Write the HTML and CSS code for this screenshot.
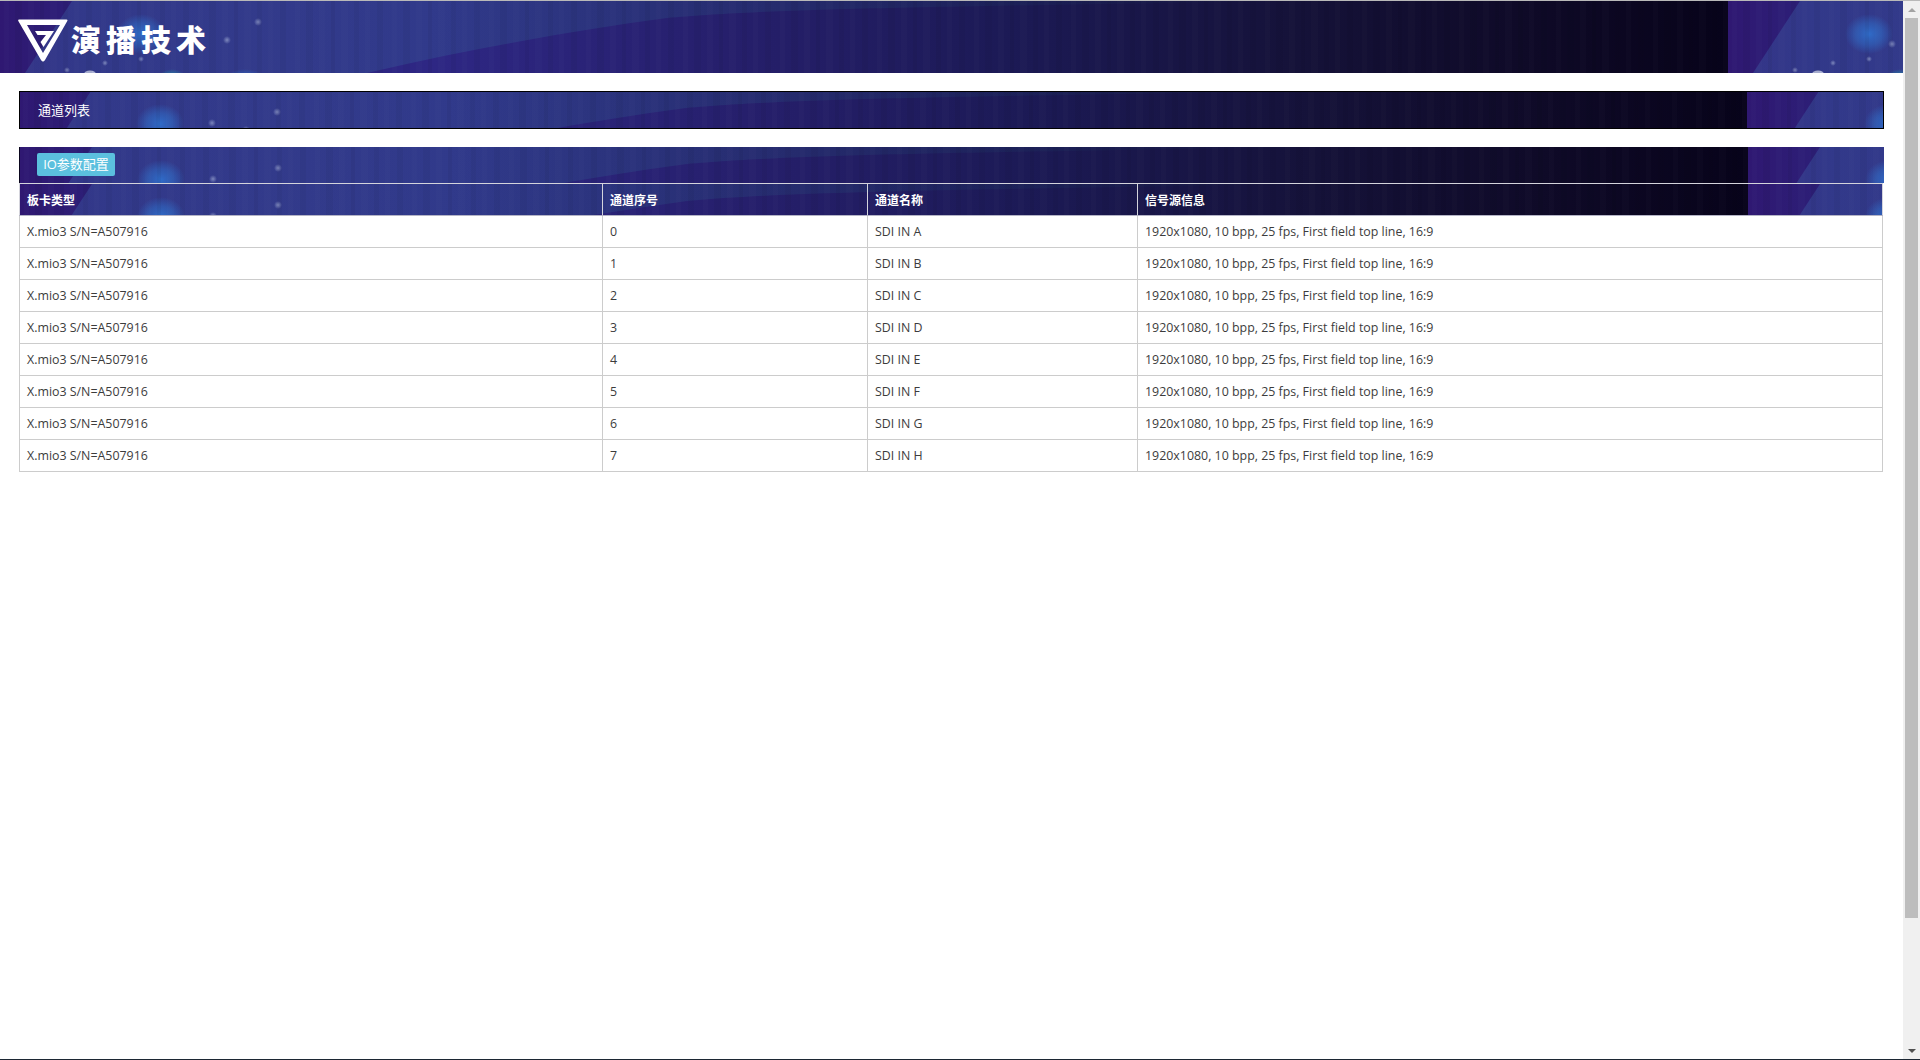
FILE: index.html
```html
<!DOCTYPE html>
<html lang="zh-CN">
<head>
<meta charset="utf-8">
<title>通道列表</title>
<link rel="stylesheet" href="styles.css">
</head>
<body>
<div class="screen">
  <div class="edge-top"></div>
  <div class="middle">
    <main class="page">
      <header class="site-header banner">
        <svg class="logo-mark" viewBox="0 0 50 43" width="50" height="43" aria-hidden="true">
          <path fill-rule="evenodd" fill="#fff" d="M1 0.5H48.5Q50 0.5 49.3 2L27 41Q25 44 23 41L0.3 2Q-0.2 0.5 1 0.5ZM9 6L25 34L42 6Z"/>
          <path fill="#fff" d="M17 12H36L25.500 28L22.500 23L28 16H19.500Z"/>
        </svg>
        <span class="logo-text">演播技术</span>
      </header>
      <div class="content">
        <div class="title-bar banner">通道列表</div>
        <section class="table-panel">
          <div class="toolbar banner"><button class="io-btn" type="button">IO参数配置</button></div>
          <div class="table-wrap">
            <table class="channels">
              <colgroup><col class="col-board"><col class="col-index"><col class="col-name"><col class="col-info"></colgroup>
              <thead>
                <tr class="banner"><th>板卡类型</th><th>通道序号</th><th>通道名称</th><th>信号源信息</th></tr>
              </thead>
              <tbody>
                <tr><td>X.mio3 S/N=A507916</td><td>0</td><td>SDI IN A</td><td>1920x1080, 10 bpp, 25 fps, First field top line, 16:9</td></tr>
                <tr><td>X.mio3 S/N=A507916</td><td>1</td><td>SDI IN B</td><td>1920x1080, 10 bpp, 25 fps, First field top line, 16:9</td></tr>
                <tr><td>X.mio3 S/N=A507916</td><td>2</td><td>SDI IN C</td><td>1920x1080, 10 bpp, 25 fps, First field top line, 16:9</td></tr>
                <tr><td>X.mio3 S/N=A507916</td><td>3</td><td>SDI IN D</td><td>1920x1080, 10 bpp, 25 fps, First field top line, 16:9</td></tr>
                <tr><td>X.mio3 S/N=A507916</td><td>4</td><td>SDI IN E</td><td>1920x1080, 10 bpp, 25 fps, First field top line, 16:9</td></tr>
                <tr><td>X.mio3 S/N=A507916</td><td>5</td><td>SDI IN F</td><td>1920x1080, 10 bpp, 25 fps, First field top line, 16:9</td></tr>
                <tr><td>X.mio3 S/N=A507916</td><td>6</td><td>SDI IN G</td><td>1920x1080, 10 bpp, 25 fps, First field top line, 16:9</td></tr>
                <tr><td>X.mio3 S/N=A507916</td><td>7</td><td>SDI IN H</td><td>1920x1080, 10 bpp, 25 fps, First field top line, 16:9</td></tr>
              </tbody>
            </table>
          </div>
        </section>
      </div>
    </main>
    <aside class="scrollbar" aria-hidden="true">
      <div class="arrow arrow-up"></div>
      <div class="track"><div class="thumb"></div></div>
      <div class="arrow arrow-down"></div>
    </aside>
  </div>
  <div class="edge-bottom"></div>
</div>
</body>
</html>
```
FILE: styles.css
```css
* { box-sizing: border-box; }
html, body { margin: 0; height: 100%; overflow: hidden; background: #fff; }
body {
  font-family: "Open Sans", "Noto Sans CJK SC", sans-serif;
  font-size: 12.4px;
  color: #3c3c3c;
}
.screen { display: flex; flex-direction: column; height: 1060px; }
.edge-top { height: 1px; background: #b9b9b9; flex: none; }
.edge-bottom { height: 1px; background: #1c2733; flex: none; }
.middle { display: flex; flex: 1; min-height: 0; }
.page { flex: 1; min-width: 0; }

.banner {
  background-color: #1a1850;
  background-repeat: repeat-x;
  background-position: 0 0;
  background-image: url("data:image/svg+xml,%3Csvg xmlns='http://www.w3.org/2000/svg' width='1728' height='100'%3E%3Cdefs%3E%3ClinearGradient id='b'%3E%3Cstop offset='0' stop-color='%232f1872'/%3E%3Cstop offset='.05' stop-color='%232c2078'/%3E%3Cstop offset='.25' stop-color='%232e2784'/%3E%3Cstop offset='.42' stop-color='%23261f6c'/%3E%3Cstop offset='.58' stop-color='%231c1a56'/%3E%3Cstop offset='.75' stop-color='%23151239'/%3E%3Cstop offset='.88' stop-color='%230f0a28'/%3E%3Cstop offset='1' stop-color='%2307031a'/%3E%3C/linearGradient%3E%3ClinearGradient id='l'%3E%3Cstop offset='0' stop-color='%233f6fb4' stop-opacity='.32'/%3E%3Cstop offset='.2' stop-color='%233f6fa8' stop-opacity='.3'/%3E%3Cstop offset='.5' stop-color='%232f7090' stop-opacity='.2'/%3E%3Cstop offset='.8' stop-color='%23206878' stop-opacity='.08'/%3E%3Cstop offset='1' stop-color='%23206878' stop-opacity='0'/%3E%3C/linearGradient%3E%3CradialGradient id='g'%3E%3Cstop offset='0' stop-color='%232f78d8' stop-opacity='.8'/%3E%3Cstop offset='.55' stop-color='%232f70cc' stop-opacity='.5'/%3E%3Cstop offset='1' stop-color='%232f70cc' stop-opacity='0'/%3E%3C/radialGradient%3E%3CradialGradient id='t'%3E%3Cstop offset='0' stop-color='%2320a8b8' stop-opacity='.8'/%3E%3Cstop offset='1' stop-color='%2320a8b8' stop-opacity='0'/%3E%3C/radialGradient%3E%3CradialGradient id='d'%3E%3Cstop offset='0' stop-color='%23b8c4e4' stop-opacity='.55'/%3E%3Cstop offset='1' stop-color='%23b8c4e4' stop-opacity='0'/%3E%3C/radialGradient%3E%3Cpattern id='s' width='97' height='10' patternUnits='userSpaceOnUse'%3E%3Crect x='4' width='5' height='10' fill='%23fff' opacity='.012'/%3E%3Crect x='15' width='7' height='10' fill='%23000' opacity='.04'/%3E%3Crect x='28' width='6' height='10' fill='%23fff' opacity='.01'/%3E%3Crect x='40' width='4' height='10' fill='%23000' opacity='.045'/%3E%3Crect x='50' width='7' height='10' fill='%23fff' opacity='.012'/%3E%3Crect x='63' width='5' height='10' fill='%23000' opacity='.04'/%3E%3Crect x='74' width='5' height='10' fill='%23fff' opacity='.01'/%3E%3Crect x='86' width='6' height='10' fill='%23000' opacity='.04'/%3E%3C/pattern%3E%3C/defs%3E%3Crect width='1728' height='100' fill='url(%23b)'/%3E%3Cpath d='M72 0L25 72L10 100H300L367 72C470 48 570 30 667 17C770 8 900 6 1300 0Z' fill='url(%23l)'/%3E%3Cellipse cx='141' cy='33' rx='24' ry='20' fill='url(%23g)'/%3E%3Cellipse cx='245' cy='80' rx='22' ry='12' fill='url(%23g)'/%3E%3Cellipse cx='172' cy='77' rx='14' ry='9' fill='url(%23t)'/%3E%3Ccircle cx='164' cy='43' r='4' fill='url(%23d)'/%3E%3Ccircle cx='105' cy='62' r='3' fill='url(%23d)'/%3E%3Ccircle cx='141' cy='58' r='3' fill='url(%23d)'/%3E%3Ccircle cx='67' cy='69' r='3' fill='url(%23d)'/%3E%3Cellipse cx='90' cy='73' rx='6' ry='3.500' fill='%23e0e6f5' opacity='.7'/%3E%3Ccircle cx='258' cy='21' r='4' fill='url(%23d)'/%3E%3Ccircle cx='227' cy='39' r='4' fill='url(%23d)'/%3E%3Ccircle cx='193' cy='32' r='4' fill='url(%23d)'/%3E%3Crect width='1728' height='100' fill='url(%23s)'/%3E%3C/svg%3E");
}

.site-header {
  height: 72px;
  padding: 18px 0 0 18px;
  display: flex;
  align-items: flex-start;
}
.logo-mark { flex: none; display: block; }
.logo-text {
  margin: 3px 0 0 3px;
  font-family: "Noto Sans CJK SC", sans-serif;
  font-weight: 900;
  font-size: 30px;
  line-height: 32px;
  letter-spacing: 5px;
  color: #fff;
  white-space: nowrap;
}

.content { padding: 18px 19px 0; }
.title-bar {
  height: 38px;
  border: 1px solid #000;
  background-position: -1px -1px;
  padding-left: 18px;
  font-size: 13px;
  line-height: 36px;
  color: #fff;
  font-family: "Noto Sans CJK SC", sans-serif;
}
.table-panel { margin-top: 18px; }
.toolbar {
  height: 36px;
  background-position: 1px 0;
  padding: 6px 0 0 18px;
}
.io-btn {
  display: block;
  width: 78px;
  height: 23px;
  padding: 0;
  border: 0;
  border-radius: 2px;
  background: #5bc0de;
  color: #fff;
  font-family: "Open Sans", "Noto Sans CJK SC", sans-serif;
  font-size: 13px;
  line-height: 23px;
}
.table-wrap { padding-right: 1px; }
.channels {
  width: 100%;
  table-layout: fixed;
  border-collapse: collapse;
}
.col-board { width: 583px; }
.col-index { width: 265px; }
.col-name { width: 270px; }
.channels th, .channels td {
  height: 32px;
  padding: 0 7px;
  text-align: left;
  white-space: nowrap;
}
.channels th {
  border: 1px solid #d4d4dc;
  border-bottom-color: #b4b4c6;
  color: #fff;
  font-size: 12px;
  font-weight: 700;
  font-family: "Noto Sans CJK SC", sans-serif;
}
.channels td { border: 1px solid #ccc; }

.scrollbar {
  flex: none;
  width: 17px;
  display: flex;
  flex-direction: column;
  background: #f0f0f0;
}
.arrow { flex: none; height: 17px; display: flex; align-items: center; justify-content: center; }
.arrow::before { content: ""; width: 0; height: 0; border-left: 4px solid transparent; border-right: 4px solid transparent; }
.arrow-up::before { border-bottom: 4px solid #a3a3a3; }
.arrow-down::before { border-top: 4px solid #505050; }
.track { flex: 1; padding: 0 2px; }
.thumb { height: 900px; background: #bdbdbd; }
```
